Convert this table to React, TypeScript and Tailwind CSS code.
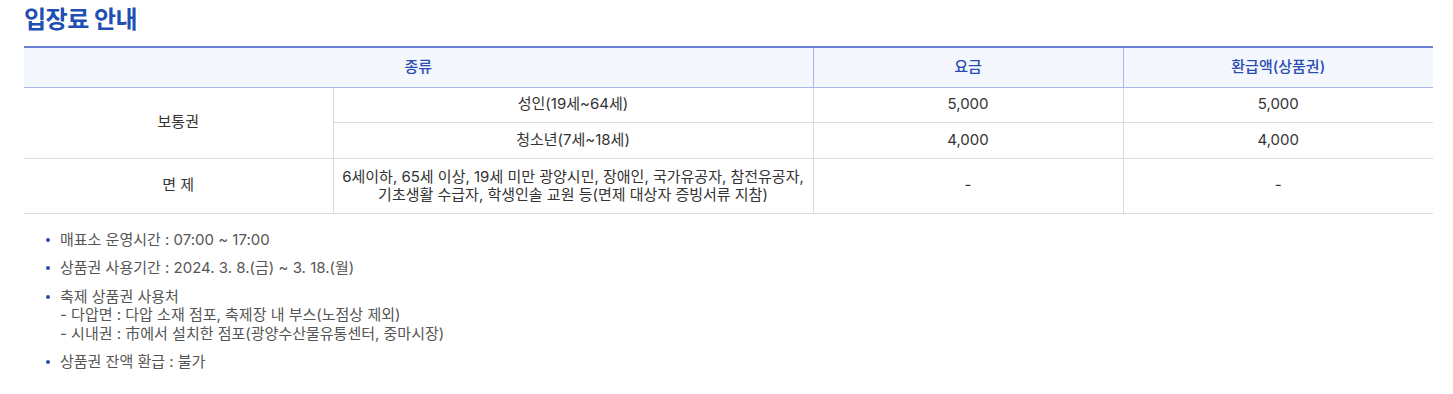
const notes = [
  ["매표소 운영시간 : 07:00 ~ 17:00"],
  ["상품권 사용기간 : 2024. 3. 8.(금) ~ 3. 18.(월)"],
  [
    "축제 상품권 사용처",
    "- 다압면 : 다압 소재 점포, 축제장 내 부스(노점상 제외)",
    "- 시내권 : 市에서 설치한 점포(광양수산물유통센터, 중마시장)",
  ],
  ["상품권 잔액 환급 : 불가"],
];

const App = () => {
  return (
    <div className="bg-white pl-6 pr-5 pb-6 font-['Inter','Noto_Sans_CJK_KR',sans-serif] text-[#333]">
      {/* Title */}
      <h2 className="pt-[4px] text-[24px] leading-[32px] font-bold text-[#1f4fb5] tracking-[-0.5px]">
        입장료 안내
      </h2>

      {/* Fee table */}
      <table className="mt-[10px] w-full border-collapse border-t-2 border-t-[#6b7fd3] text-center text-[15px]">
        <colgroup>
          <col className="w-[309px]" />
          <col className="w-[480px]" />
          <col className="w-[310px]" />
          <col />
        </colgroup>
        <thead>
          <tr className="h-[40px] bg-[#f4f7fe] text-[#2a4db0] font-medium">
            <th colSpan={2} className="border-b border-r border-[#a9b6e6] font-medium">종류</th>
            <th className="border-b border-r border-[#a9b6e6] font-medium">요금</th>
            <th className="border-b border-[#a9b6e6] font-medium">환급액(상품권)</th>
          </tr>
        </thead>
        <tbody>
          <tr className="h-[35px]">
            <td rowSpan={2} className="border-b border-r border-[#dcdcdc]">보통권</td>
            <td className="border-b border-r border-[#dcdcdc]">성인(19세~64세)</td>
            <td className="border-b border-r border-[#dcdcdc]">5,000</td>
            <td className="border-b border-[#dcdcdc]">5,000</td>
          </tr>
          <tr className="h-[36px]">
            <td className="border-b border-r border-[#dcdcdc]">청소년(7세~18세)</td>
            <td className="border-b border-r border-[#dcdcdc]">4,000</td>
            <td className="border-b border-[#dcdcdc]">4,000</td>
          </tr>
          <tr className="h-[55px]">
            <td className="border-b border-r border-[#dcdcdc]">면 제</td>
            <td className="border-b border-r border-[#dcdcdc] leading-[18px]">
              6세이하, 65세 이상, 19세 미만 광양시민, 장애인, 국가유공자, 참전유공자,
              <br />
              기초생활 수급자, 학생인솔 교원 등(면제 대상자 증빙서류 지참)
            </td>
            <td className="border-b border-r border-[#dcdcdc]">-</td>
            <td className="border-b border-[#dcdcdc]">-</td>
          </tr>
        </tbody>
      </table>

      {/* Notes */}
      <ul className="mt-[17px] flex flex-col gap-[10px] pl-[22px] text-[15px] leading-[18.5px] text-[#555]">
        {notes.map((lines, i) => (
          <li key={i} className="flex">
            <span className="mt-[7px] mr-[10px] h-[4px] w-[4px] shrink-0 rounded-full bg-[#2a4db0]" />
            <div>
              {lines.map((l, j) => (
                <div key={j}>{l}</div>
              ))}
            </div>
          </li>
        ))}
      </ul>
    </div>
  );
};

export default App;
